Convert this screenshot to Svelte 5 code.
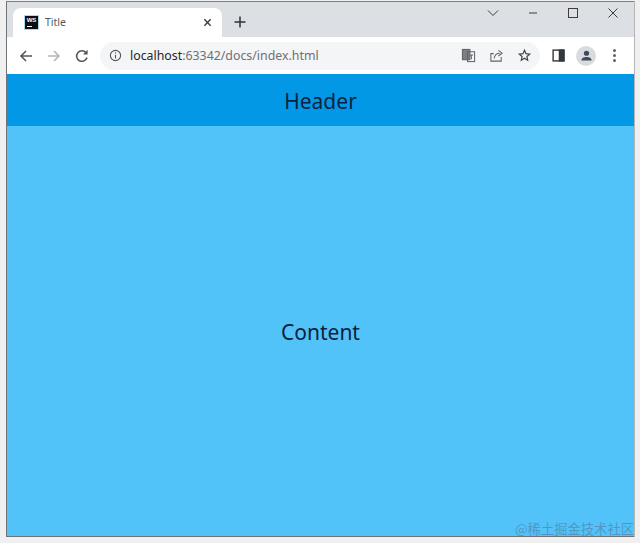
<script>
  const tab = { title: 'Title' };
  const host = 'localhost';
  const rest = ':63342/docs/index.html';
</script>

<div class="page">
  <div class="window">
    <div class="tabstrip">
      <div class="tab">
        <span class="favicon">WS</span>
        <span class="tab-title">{tab.title}</span>
        <svg class="tab-close" viewBox="0 0 10 10" aria-hidden="true">
          <path d="M1.5 1.5l7 7M8.5 1.5l-7 7" />
        </svg>
      </div>
      <svg class="new-tab" viewBox="0 0 12 12" aria-hidden="true">
        <path d="M6 .5v11M.5 6h11" />
      </svg>
      <div class="win-controls">
        <svg viewBox="0 0 12 12" aria-hidden="true"><path d="M1 3.500l5 5 5-5" /></svg>
        <svg viewBox="0 0 12 12" aria-hidden="true"><path d="M2 6h8" /></svg>
        <svg viewBox="0 0 12 12" aria-hidden="true"><rect x="1.5" y="1.5" width="9" height="9" /></svg>
        <svg viewBox="0 0 12 12" aria-hidden="true"><path d="M1.5 1.5l9 9M10.5 1.5l-9 9" /></svg>
      </div>
    </div>

    <div class="toolbar">
      <svg class="nav" viewBox="0 0 16 16" aria-hidden="true"><path d="M14 8H3M8 3L3 8l5 5" /></svg>
      <svg class="nav off" viewBox="0 0 16 16" aria-hidden="true"><path d="M2 8h11M8 3l5 5-5 5" /></svg>
      <svg class="nav" viewBox="0 0 16 16" aria-hidden="true">
        <path d="M13 9.500A5.300 5.300 0 1 1 12 4.600" />
        <path class="solid" d="M13.600 1.800v4.600H9z" />
      </svg>

      <div class="omnibox">
        <svg class="info" viewBox="0 0 14 14" aria-hidden="true">
          <circle cx="7" cy="7" r="5.500" />
          <path d="M7 6.200v4M7 3.600v1.300" />
        </svg>
        <span class="url"><span class="host">{host}</span>{rest}</span>
        <div class="omni-actions">
          <svg viewBox="0 0 16 16" aria-hidden="true">
            <rect class="solid" x="1.5" y="1.5" width="8" height="11" />
            <rect x="7" y="4" width="7.5" height="10.5" />
            <path d="M9 7.500h4M11 7v5" />
          </svg>
          <svg viewBox="0 0 16 16" aria-hidden="true">
            <path d="M13 9.500v4.500H2V6h3" />
            <path d="M5.500 11c.5-4 3-5.500 6-5.500M10 2.500l4 3-4 3" />
          </svg>
          <svg class="star" viewBox="0 0 16 16" aria-hidden="true">
            <path d="M8 2.500l1.600 3.600 3.900.4-2.900 2.600.8 3.900L8 11l-3.400 2 .8-3.900-2.900-2.600 3.900-.4z" />
          </svg>
        </div>
      </div>

      <svg class="panel" viewBox="0 0 14 14" aria-hidden="true">
        <rect x="1.200" y="1.200" width="11.600" height="11.600" />
        <rect class="solid" x="8" y="1.200" width="4.800" height="11.600" />
      </svg>
      <div class="avatar">
        <svg viewBox="0 0 14 14" aria-hidden="true">
          <circle cx="7" cy="4.600" r="2.800" />
          <path d="M1.500 12.500c0-3 2.600-4 5.500-4s5.500 1 5.500 4z" />
        </svg>
      </div>
      <div class="kebab"><i></i><i></i><i></i></div>
    </div>

    <header class="app-header">Header</header>
    <main class="app-content">Content</main>
  </div>
  <span class="watermark">@稀土掘金技术社区</span>
</div>

<style>
  :global(body) {
    margin: 0;
    background: #f1f0f0;
  }

  .page {
    position: relative;
    box-sizing: border-box;
    width: 640px;
    height: 543px;
    padding: 1px 6px 6px 6px;
    overflow: hidden;
  }

  .window {
    display: flex;
    flex-direction: column;
    height: 100%;
    border: solid #6f7478;
    border-width: 0 0 1px 1px;
    border-top: 1px solid #7d7f82;
    box-sizing: border-box;
    box-shadow: 1px 0 0 #b5b5b5;
  }

  .tabstrip {
    display: flex;
    align-items: flex-end;
    height: 35px;
    padding-left: 6px;
    background: #dcdfe3;
    flex: none;
  }

  .tab {
    display: flex;
    align-items: center;
    width: 209px;
    height: 29px;
    box-sizing: border-box;
    padding: 0 10px 1px 12px;
    background: #fff;
    border-radius: 8px 8px 0 0;
  }

  .favicon {
    position: relative;
    width: 13px;
    height: 13px;
    background: #0b0f14;
    color: #fff;
    font: 700 6px/8px 'Liberation Sans', sans-serif;
    text-align: center;
    box-shadow: 0 0 0 1px #a8dcec;
  }

  .favicon::after {
    content: '';
    position: absolute;
    left: 2px;
    bottom: 2px;
    width: 5px;
    height: 1px;
    background: #fff;
  }

  .tab-title {
    margin-left: 7px;
    flex: 1;
    font: 10.5px 'Noto Sans', sans-serif;
    color: #55595d;
  }

  .tab-close {
    width: 9px;
    height: 9px;
    fill: none;
    stroke: #3c4043;
    stroke-width: 1.6;
  }

  .new-tab {
    width: 12px;
    height: 12px;
    margin: 0 0 9px 12px;
    fill: none;
    stroke: #2f3336;
    stroke-width: 1.5;
  }

  .win-controls {
    display: flex;
    gap: 28px;
    margin: 0 15px 18px auto;
  }

  .win-controls svg {
    width: 12px;
    height: 12px;
    fill: none;
    stroke: #3b3d40;
    stroke-width: 1;
  }

  .toolbar {
    display: flex;
    align-items: center;
    height: 37px;
    padding: 0 0 0 11px;
    background: #fff;
    flex: none;
  }

  .nav {
    width: 16px;
    height: 16px;
    margin-right: 12px;
    fill: none;
    stroke: #54585c;
    stroke-width: 1.6;
  }

  .nav.off {
    stroke: #b3b6ba;
  }

  .nav .solid {
    fill: #54585c;
    stroke: none;
  }

  .omnibox {
    display: flex;
    align-items: center;
    width: 440px;
    height: 28px;
    margin-left: -2px;
    padding: 0 8px 0 9px;
    box-sizing: border-box;
    background: #f4f5f6;
    border-radius: 14px;
  }

  .info {
    width: 13px;
    height: 13px;
    fill: none;
    stroke: #54585c;
    stroke-width: 1.2;
  }

  .url {
    margin-left: 8px;
    font: 12.35px 'Noto Sans', sans-serif;
    color: #6d7175;
  }

  .host {
    color: #24282c;
  }

  .omni-actions {
    display: flex;
    align-items: center;
    gap: 13px;
    margin-left: auto;
  }

  .omni-actions svg {
    width: 15px;
    height: 15px;
    fill: none;
    stroke: #5f6368;
    stroke-width: 1.1;
  }

  .omni-actions .solid {
    fill: #7b7f84;
  }

  .omni-actions .star {
    stroke: #3f4347;
    stroke-width: 1.3;
  }

  .panel {
    width: 13px;
    height: 13px;
    margin-left: 12px;
    fill: #fff;
    stroke: #33373b;
    stroke-width: 1.5;
  }

  .panel .solid {
    fill: #33373b;
  }

  .avatar {
    display: grid;
    place-items: center;
    width: 20px;
    height: 20px;
    margin-left: 11px;
    border-radius: 50%;
    background: #d9dbde;
  }

  .avatar svg {
    width: 13px;
    height: 13px;
    fill: #3f4a5a;
  }

  .kebab {
    display: flex;
    flex-direction: column;
    gap: 2px;
    margin-left: 17px;
  }

  .kebab i {
    width: 3px;
    height: 3px;
    border-radius: 50%;
    background: #5f6368;
  }

  .app-header,
  .app-content {
    display: flex;
    align-items: center;
    justify-content: center;
    box-sizing: border-box;
    padding-top: 2px;
    font-family: 'Noto Sans', sans-serif;
    font-size: 21px;
    color: #0a2240;
  }

  .app-header {
    height: 52px;
    flex: none;
    background: #0398e6;
  }

  .app-content {
    flex: 1;
    background: #52c3f9;
  }

  .watermark {
    position: absolute;
    right: 6px;
    bottom: 5px;
    font: 13.3px 'Noto Sans CJK SC', sans-serif;
    color: rgba(80, 120, 160, 0.6);
  }
</style>
